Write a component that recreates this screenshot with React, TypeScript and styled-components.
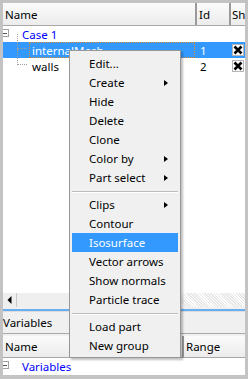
import React from "react";
import styled, { createGlobalStyle } from "styled-components";

const Global = createGlobalStyle`
  html, body { margin: 0; padding: 0; background: #c3c3c3; }
  * { box-sizing: border-box; }
`;

const FONT = `"Noto Sans", "Open Sans", "Liberation Sans", sans-serif`;

const Frame = styled.div`
  position: relative;
  width: 248px;
  height: 379px;
  background: #c3c3c3;
  padding: 3px 3px 4px 3px;
  display: flex;
  flex-direction: column;
  font-family: ${FONT};
  font-size: 11.5px;
  color: #000;
  overflow: hidden;
`;

const HeaderRow = styled.div<{ $h: number }>`
  height: ${(p) => p.$h}px;
  display: flex;
  background: linear-gradient(#fbfbfb, #ececec);
  border-bottom: 1px solid #a8a8a8;
  flex-shrink: 0;
  overflow: hidden;
`;

const HeaderCell = styled.div<{ $w?: number; $pad?: number }>`
  ${(p) => (p.$w ? `width: ${p.$w}px; flex-shrink: 0;` : "flex: 1;")}
  display: flex;
  align-items: center;
  padding-left: ${(p) => p.$pad ?? 2}px;
  border-left: 2px solid #9a9a9a;
  white-space: nowrap;
  &:first-child { border-left: none; }
`;

const TreeBody = styled.div`
  flex: 1;
  background: #fff;
  display: flex;
  flex-direction: column;
  overflow: hidden;
`;

const Row = styled.div<{ $sel?: boolean }>`
  height: 16px;
  display: flex;
  align-items: center;
  background: ${(p) => (p.$sel ? "#3399ff" : "transparent")};
  color: ${(p) => (p.$sel ? "#fff" : "#000")};
  flex-shrink: 0;
`;

const NameCell = styled.div<{ $indent: number; $focus?: boolean }>`
  position: relative;
  width: 192px;
  height: 100%;
  display: flex;
  align-items: center;
  padding-left: ${(p) => p.$indent}px;
  white-space: nowrap;
  ${(p) =>
    p.$focus
      ? `outline: 1px dotted #d98a3a; outline-offset: -1px; margin-left: 26px; width: 166px; padding-left: 3px;`
      : ""}
`;

const Label = styled.span<{ $blue?: boolean }>`
  color: ${(p) => (p.$blue ? "#0000ff" : "inherit")};
`;

const IdCell = styled.div`
  width: 34px;
  padding-left: 5px;
  height: 100%;
  display: flex;
  align-items: center;
`;

const ShowCell = styled.div`
  flex: 1;
  display: flex;
  align-items: center;
  padding-left: 3px;
`;

const CheckBox = styled.div`
  width: 12px;
  height: 12px;
  background: #fff;
  border: 1px solid #b5b5b5;
  display: flex;
  align-items: center;
  justify-content: center;
`;

const Expander = styled.div`
  position: absolute;
  left: 0;
  top: 3px;
  width: 6px;
  height: 8px;
  border: 1px solid #a0a0a0;
  border-left: none;
  &::after {
    content: "";
    position: absolute;
    left: 0;
    top: 3px;
    width: 4px;
    height: 1px;
    background: #555;
  }
`;

const TreeLine = styled.div<{ $top: number; $h: number }>`
  position: absolute;
  left: 17px;
  top: ${(p) => p.$top}px;
  height: ${(p) => p.$h}px;
  width: 10px;
  border-left: 1px dotted #a0a0a0;
  border-bottom: 1px dotted #a0a0a0;
`;

const ScrollBar = styled.div`
  height: 14px;
  display: flex;
  flex-shrink: 0;
  background-color: #fff;
  background-image: repeating-linear-gradient(45deg, #e6e6e6 0 1px, #fff 1px 2px);
`;

const ArrowBtn = styled.div`
  width: 14px;
  height: 14px;
  background: #efefef;
  display: flex;
  align-items: center;
  justify-content: center;
  border-right: 1px solid #c8c8c8;
`;

const Thumb = styled.div`
  width: 110px;
  background: #efefef;
  border-right: 1px solid #c8c8c8;
`;

const Gap = styled.div<{ $h: number; $c: string }>`
  height: ${(p) => p.$h}px;
  background: ${(p) => p.$c};
  flex-shrink: 0;
`;

const PanelTitle = styled.div`
  height: 23px;
  background: #f0f0f0;
  border-top: 1px solid #dcdcdc;
  border-bottom: 1px solid #a8a8a8;
  display: flex;
  align-items: center;
  flex-shrink: 0;
`;

const BottomRow = styled.div`
  height: 17px;
  background: #fff;
  position: relative;
  display: flex;
  align-items: center;
  padding-left: 19px;
  flex-shrink: 0;
`;

const Menu = styled.div`
  position: absolute;
  left: 69px;
  top: 50px;
  width: 112px;
  height: 308px;
  background: #f0f0f0;
  border: 1px solid #979797;
  box-shadow: 2px 2px 2px rgba(0, 0, 0, 0.25);
  padding: 3px 2px;
  display: flex;
  flex-direction: column;
`;

const MenuItem = styled.div<{ $hi?: boolean }>`
  height: 19px;
  display: flex;
  align-items: center;
  padding-left: 17px;
  padding-right: 10px;
  background: ${(p) => (p.$hi ? "#3399ff" : "transparent")};
  color: ${(p) => (p.$hi ? "#fff" : "#000")};
  white-space: nowrap;
  flex-shrink: 0;
`;

const MenuText = styled.span`
  flex: 1;
`;

const SubArrow = styled.span`
  width: 0;
  height: 0;
  border-top: 3.5px solid transparent;
  border-bottom: 3.5px solid transparent;
  border-left: 4px solid #000;
`;

const Separator = styled.div`
  height: 8px;
  display: flex;
  align-items: center;
  flex-shrink: 0;
  &::after {
    content: "";
    flex: 1;
    height: 1px;
    background: #bdbdbd;
    box-shadow: 0 1px 0 #fff;
  }
`;

const XMark = () => (
  <svg width="10" height="10" viewBox="0 0 10 10">
    <path d="M1.5 1.5 L8.5 8.5 M8.5 1.5 L1.5 8.5" stroke="#000" strokeWidth="2.6" />
  </svg>
);

const LeftArrow = () => (
  <svg width="6" height="8" viewBox="0 0 6 8">
    <path d="M4.5 0 L0.5 4 L4.5 8 Z" fill="#000" />
  </svg>
);

type Item = { label: string; sub?: boolean; hi?: boolean } | "sep";

const items: Item[] = [
  { label: "Edit..." },
  { label: "Create", sub: true },
  { label: "Hide" },
  { label: "Delete" },
  { label: "Clone" },
  { label: "Color by", sub: true },
  { label: "Part select", sub: true },
  "sep",
  { label: "Clips", sub: true },
  { label: "Contour" },
  { label: "Isosurface", hi: true },
  { label: "Vector arrows" },
  { label: "Show normals" },
  { label: "Particle trace" },
  "sep",
  { label: "Load part" },
  { label: "New group" },
];

export default function App() {
  return (
    <>
      <Global />
      <Frame>
        <HeaderRow $h={23}>
          <HeaderCell $w={192}>Name</HeaderCell>
          <HeaderCell $w={34} $pad={2}>Id</HeaderCell>
          <HeaderCell $pad={1}>Sh</HeaderCell>
        </HeaderRow>
        <TreeBody>
          <Row>
            <NameCell $indent={19}>
              <Expander />
              <Label $blue>Case 1</Label>
            </NameCell>
          </Row>
          <Row $sel>
            <NameCell $indent={0} $focus>
              <Label>internalMesh</Label>
            </NameCell>
            <IdCell>1</IdCell>
            <ShowCell>
              <CheckBox>
                <XMark />
              </CheckBox>
            </ShowCell>
          </Row>
          <Row>
            <NameCell $indent={29}>
              <Label>walls</Label>
            </NameCell>
            <IdCell>2</IdCell>
            <ShowCell>
              <CheckBox>
                <XMark />
              </CheckBox>
            </ShowCell>
          </Row>
        </TreeBody>
        <ScrollBar>
          <ArrowBtn>
            <LeftArrow />
          </ArrowBtn>
          <Thumb />
        </ScrollBar>
        <Gap $h={2} $c="#f0f0f0" />
        <Gap $h={2} $c="#6aaef0" />
        <PanelTitle>Variables</PanelTitle>
        <Gap $h={2} $c="#f0f0f0" />
        <HeaderRow $h={22}>
          <HeaderCell $w={179}>Name</HeaderCell>
          <HeaderCell $pad={2}>Range</HeaderCell>
        </HeaderRow>
        <BottomRow>
          <Expander />
          <Label $blue>Variables</Label>
        </BottomRow>
        <TreeLine $top={34} $h={15} />
        <TreeLine $top={49} $h={16} />
        <Menu>
          {items.map((it, i) =>
            it === "sep" ? (
              <Separator key={i} />
            ) : (
              <MenuItem key={i} $hi={it.hi}>
                <MenuText>{it.label}</MenuText>
                {it.sub && <SubArrow />}
              </MenuItem>
            )
          )}
        </Menu>
      </Frame>
    </>
  );
}
